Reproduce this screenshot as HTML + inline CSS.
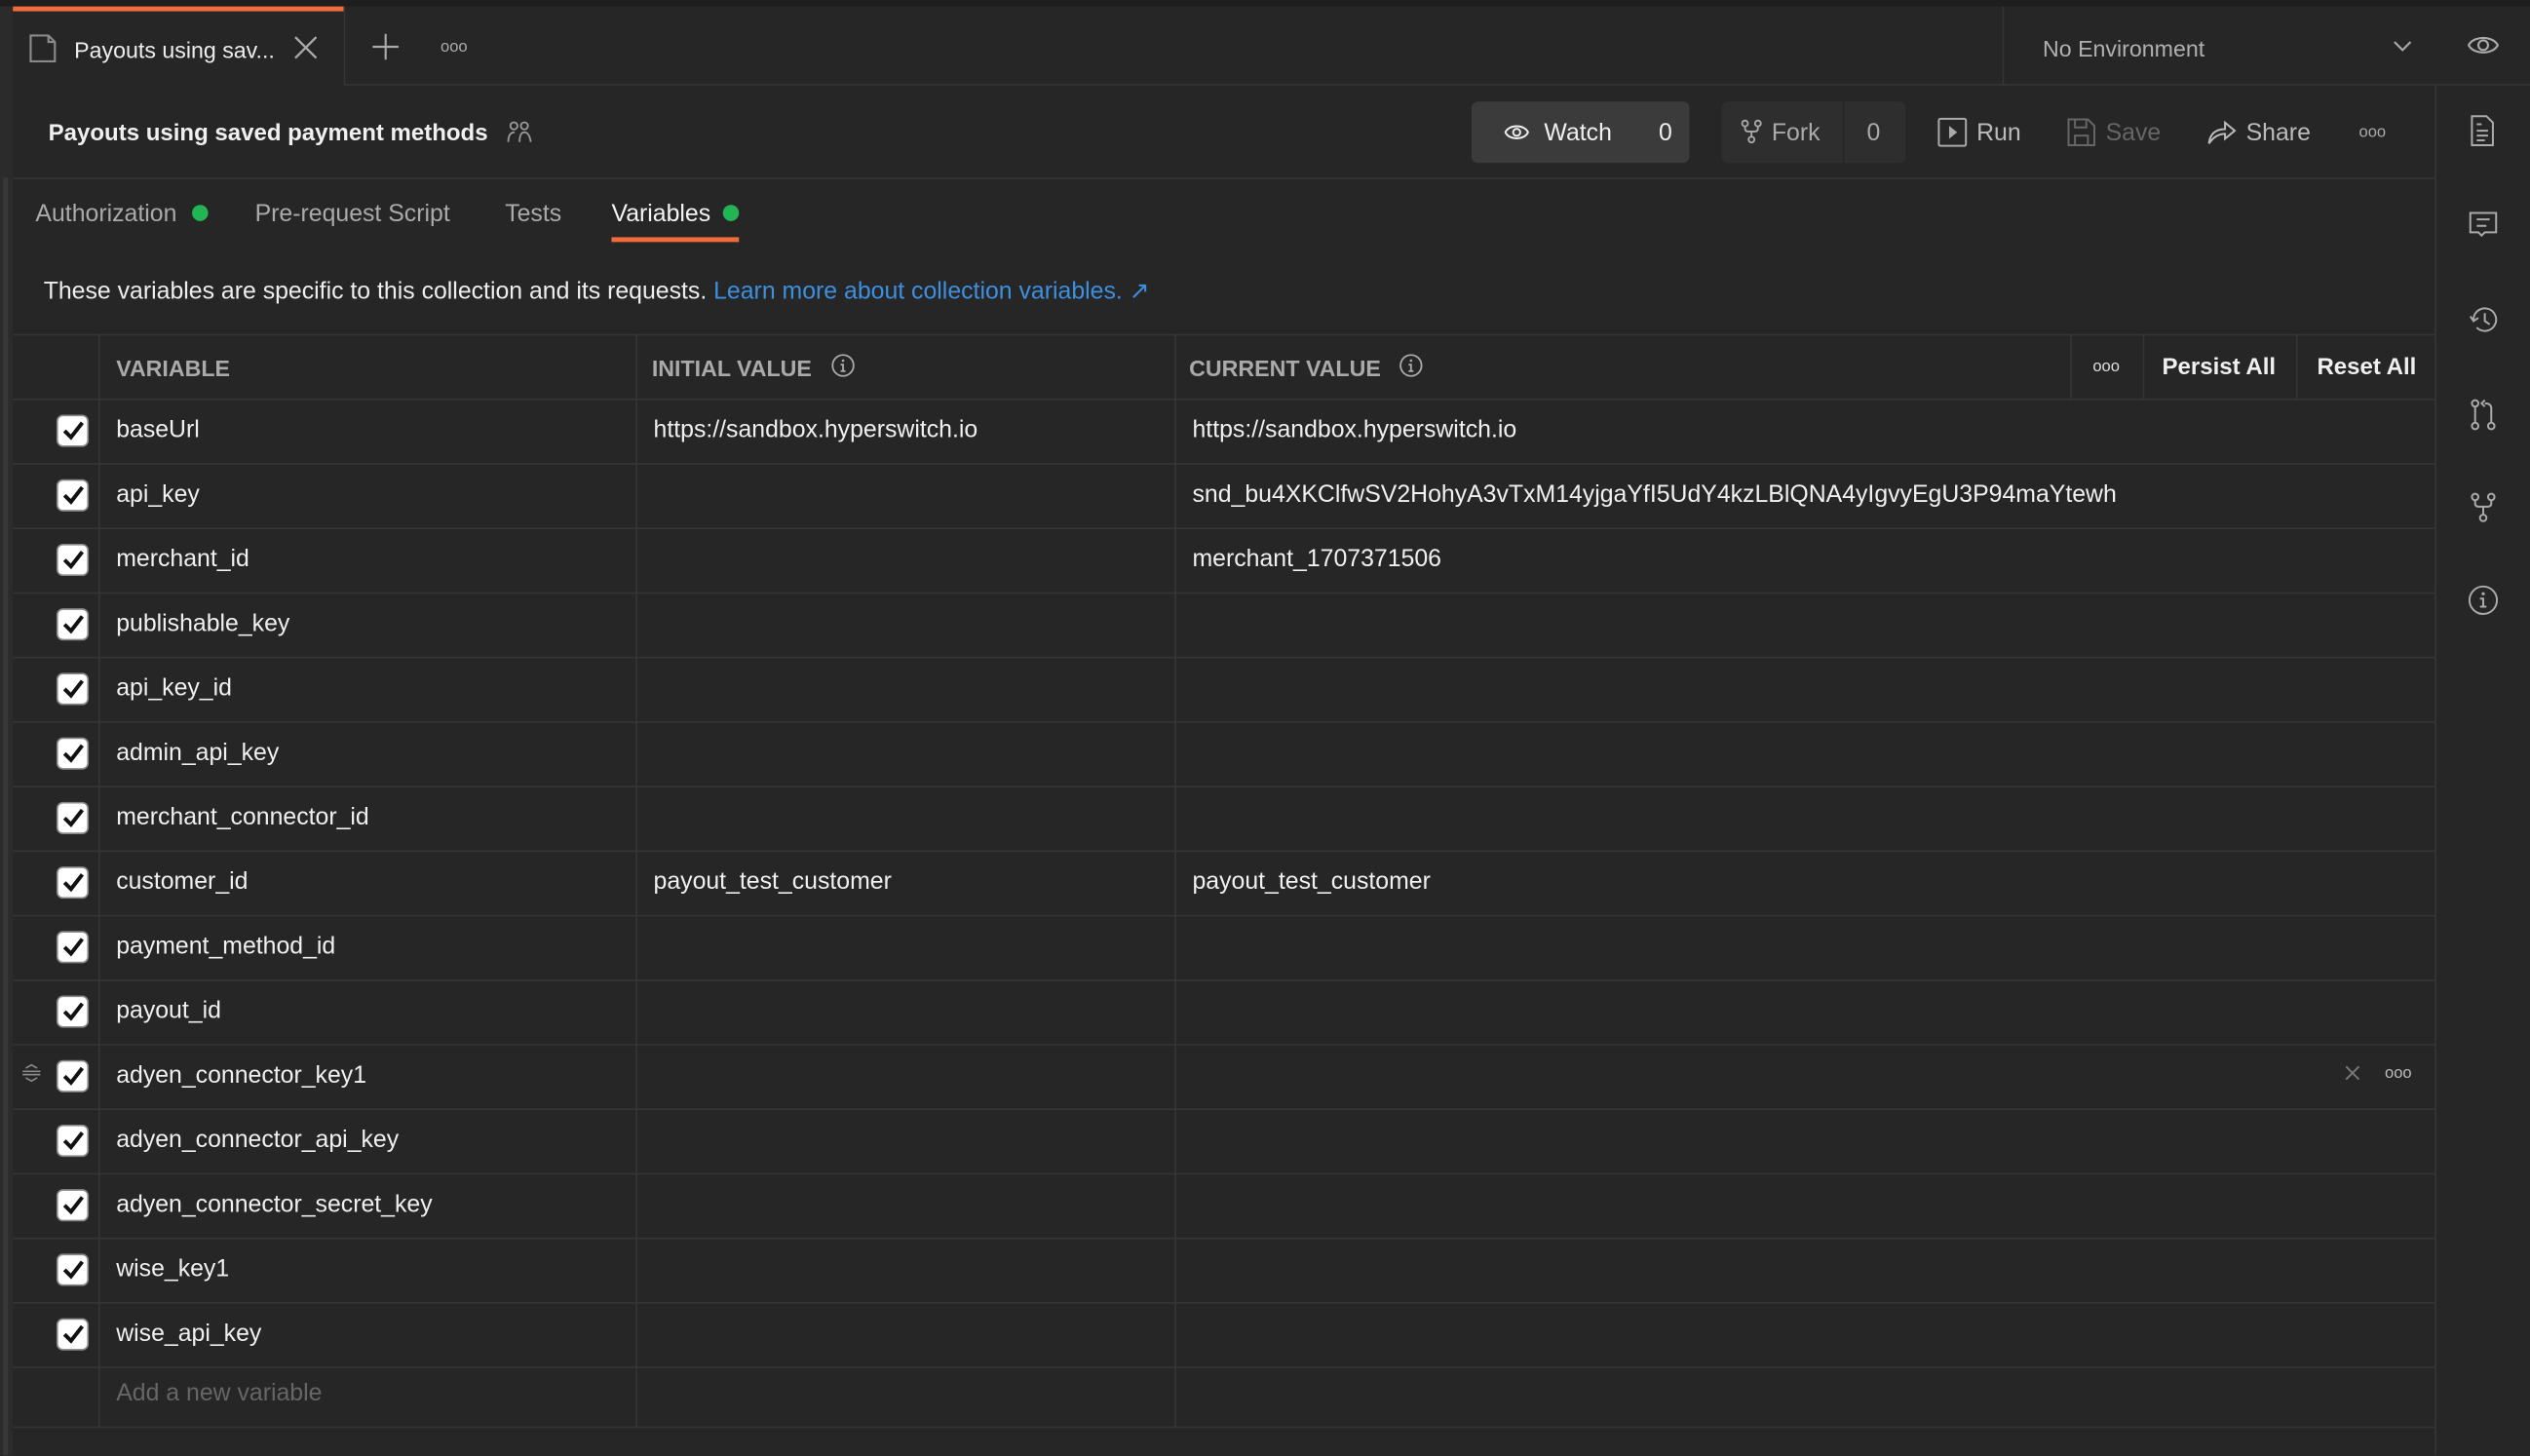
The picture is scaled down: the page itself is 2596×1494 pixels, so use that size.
<!DOCTYPE html>
<html><head><meta charset="utf-8">
<style>
*{box-sizing:border-box;margin:0;padding:0}
html,body{width:2596px;height:1494px;overflow:hidden;background:#262626}
#s{position:absolute;left:0;top:0;width:1568px;height:902px;transform:scale(1.655612);transform-origin:0 0;background:#262626;font-family:"Liberation Sans",sans-serif;color:#f0f0f0}
.a{position:absolute}
.t{position:absolute;white-space:nowrap;font-size:15px;line-height:20px;margin-top:1px}
.hl{position:absolute;height:1px;background:#353535}
.vl{position:absolute;width:1px;background:#353535}
.cb{position:absolute;left:35px;width:20px;height:20px;background:#fff;border-radius:4px;border:1px solid #888}
.cb svg{position:absolute;left:3px;top:3px}
svg{position:absolute;overflow:visible}
</style></head><body><div id="s">
<div class="a" style="left:0;top:0;width:1568px;height:4px;background:#1e1e1e"></div>
<div class="a" style="left:0;top:4px;width:8px;height:898px;background:#2b2b2b"></div>
<div class="a" style="left:2px;top:110px;width:3px;height:792px;background:#383838"></div>
<div class="a" style="left:8px;top:4px;width:205px;height:3px;background:#f26b3a"></div>
<div class="vl" style="left:213px;top:4px;height:48px"></div>
<div class="hl" style="left:213px;top:52px;width:1355px"></div>
<svg style="left:18px;top:21px" width="18" height="18"><path d="M1 1h11l4 4v12H1z M12 1v4h4" fill="none" stroke="#8a8a8a" stroke-width="1.3"/></svg>
<div class="t" style="left:46px;top:20px;font-size:14px;color:#eee">Payouts using sav...</div>
<svg style="left:182px;top:22px" width="15" height="15"><path d="M1 1l13 13M14 1L1 14" stroke="#aaa" stroke-width="1.4"/></svg>
<svg style="left:231px;top:21px" width="16" height="16"><path d="M8 0v16M0 8h16" stroke="#aaa" stroke-width="1.3"/></svg>
<div class="t" style="left:273px;top:19px;font-size:10px;color:#aaa">ooo</div>
<div class="vl" style="left:1241px;top:4px;height:48px"></div>
<div class="t" style="left:1266px;top:19px;font-size:14px;color:#b0b0b0">No Environment</div>
<svg style="left:1483px;top:25px" width="12" height="8"><path d="M1 1l5 5 5-5" fill="none" stroke="#aaa" stroke-width="1.3"/></svg>
<svg style="left:1529px;top:20px" width="20" height="16"><path d="M1 8C4 2 16 2 19 8C16 14 4 14 1 8z" fill="none" stroke="#aaa" stroke-width="1.3"/><circle cx="10" cy="8" r="3" fill="none" stroke="#aaa" stroke-width="1.3"/></svg>
<div class="vl" style="left:1509px;top:52px;height:850px"></div>
<svg style="left:1531px;top:71px" width="16" height="20"><path d="M1 1h9l4 4v14H1z M4 6h3 M4 10h7 M4 13h7 M4 16h5" fill="none" stroke="#aaa" stroke-width="1.2"/></svg>
<svg style="left:1530px;top:131px" width="18" height="18"><path d="M1 1h16v12H10l-2 2-2-2H1z M5 5h8 M5 9h6" fill="none" stroke="#aaa" stroke-width="1.2"/></svg>
<svg style="left:1530px;top:189px" width="18" height="18"><path d="M3 9a7 7 0 1 1 2 5 M1 7l2 3 3-2 M10 5v5l3 2" fill="none" stroke="#aaa" stroke-width="1.2"/></svg>
<svg style="left:1531px;top:247px" width="16" height="20"><circle cx="3" cy="3" r="2" fill="none" stroke="#aaa" stroke-width="1.2"/><circle cx="3" cy="17" r="2" fill="none" stroke="#aaa" stroke-width="1.2"/><circle cx="13" cy="17" r="2" fill="none" stroke="#aaa" stroke-width="1.2"/><path d="M3 5v10 M13 15V6q0-3-4-3 M9 1L7 3l2 2" fill="none" stroke="#aaa" stroke-width="1.2"/></svg>
<svg style="left:1531px;top:305px" width="16" height="20"><circle cx="3" cy="3" r="2" fill="none" stroke="#aaa" stroke-width="1.2"/><circle cx="13" cy="3" r="2" fill="none" stroke="#aaa" stroke-width="1.2"/><circle cx="8" cy="16" r="2" fill="none" stroke="#aaa" stroke-width="1.2"/><path d="M3 5v2q0 2 2 2h6q2 0 2-2V5 M8 9v5" fill="none" stroke="#aaa" stroke-width="1.2"/></svg>
<svg style="left:1529px;top:362px" width="20" height="20"><circle cx="10" cy="10" r="8.5" fill="none" stroke="#aaa" stroke-width="1.2"/><circle cx="10" cy="6" r="1" fill="#aaa"/><path d="M8 9h2v5 M8 14h4" fill="none" stroke="#aaa" stroke-width="1.2"/></svg>
<div class="t" style="left:30px;top:72px;font-weight:bold;font-size:14.5px">Payouts using saved payment methods</div>
<svg style="left:314px;top:75px" width="16" height="14"><circle cx="4.5" cy="3" r="2.2" fill="none" stroke="#999" stroke-width="1.1"/><circle cx="11" cy="3" r="2.2" fill="none" stroke="#999" stroke-width="1.1"/><path d="M1 13q0-6 4-6M8 13q0-6 3-6 3 0 4 6" fill="none" stroke="#999" stroke-width="1.1"/></svg>
<div class="a" style="left:912px;top:63px;width:135px;height:38px;background:#3b3b3b;border-radius:4px"></div>
<svg style="left:932px;top:76px" width="16" height="12"><path d="M1 6C3 1 13 1 15 6C13 11 3 11 1 6z" fill="none" stroke="#eee" stroke-width="1.2"/><circle cx="8" cy="6" r="2.2" fill="none" stroke="#eee" stroke-width="1.2"/></svg>
<div class="t" style="left:957px;top:72px">Watch</div>
<div class="t" style="left:1028px;top:72px">0</div>
<div class="a" style="left:1067px;top:63px;width:114px;height:38px;background:#2e2e2e;border-radius:4px"></div>
<div class="vl" style="left:1142px;top:63px;height:38px;background:#262626"></div>
<svg style="left:1079px;top:74px" width="13" height="15"><circle cx="2.5" cy="2.5" r="1.8" fill="none" stroke="#aaa" stroke-width="1.1"/><circle cx="10.5" cy="2.5" r="1.8" fill="none" stroke="#aaa" stroke-width="1.1"/><circle cx="6.5" cy="12.5" r="1.8" fill="none" stroke="#aaa" stroke-width="1.1"/><path d="M2.5 4.5v1q0 2 2 2h4q2 0 2-2v-1M6.5 7.5v3" fill="none" stroke="#aaa" stroke-width="1.1"/></svg>
<div class="t" style="left:1098px;top:72px;color:#aaa">Fork</div>
<div class="t" style="left:1157px;top:72px;color:#aaa">0</div>
<svg style="left:1201px;top:73px" width="18" height="18"><rect x="0.6" y="0.6" width="16.8" height="16.8" rx="1" fill="none" stroke="#aaa" stroke-width="1.2"/><path d="M7 5l5 4-5 4z" fill="#aaa"/></svg>
<div class="t" style="left:1225px;top:72px;color:#bbb">Run</div>
<svg style="left:1281px;top:73px" width="18" height="18"><path d="M1 1h12l4 4v12H1z M5 1v5h7V1 M5 17v-6h8v6" fill="none" stroke="#666" stroke-width="1.2"/></svg>
<div class="t" style="left:1305px;top:72px;color:#666">Save</div>
<svg style="left:1368px;top:73px" width="18" height="17"><path d="M1 16q1-9 10-9V3l6 5-6 5V10q-6 0-10 6" fill="none" stroke="#bbb" stroke-width="1.2"/></svg>
<div class="t" style="left:1392px;top:72px;color:#bbb">Share</div>
<div class="t" style="left:1462px;top:72px;font-size:10px;color:#aaa">ooo</div>
<div class="hl" style="left:8px;top:110px;width:1501px"></div>
<div class="t" style="left:22px;top:122px;color:#aaa">Authorization</div>
<div class="a" style="left:119px;top:127px;width:10px;height:10px;border-radius:50%;background:#22b455"></div>
<div class="t" style="left:158px;top:122px;color:#aaa">Pre-request Script</div>
<div class="t" style="left:313px;top:122px;color:#aaa">Tests</div>
<div class="t" style="left:379px;top:122px;color:#f4f4f4">Variables</div>
<div class="a" style="left:448px;top:127px;width:10px;height:10px;border-radius:50%;background:#22b455"></div>
<div class="a" style="left:379px;top:147px;width:79px;height:3px;background:#f26b3a"></div>
<div class="t" style="left:27px;top:170px;color:#eee">These variables are specific to this collection and its requests. <span style="color:#3d8fe0">Learn more about collection variables. ↗</span></div>
<div class="hl" style="left:8px;top:207px;width:1501px"></div>
<div class="t" style="left:72px;top:217px;color:#aaa;font-weight:bold;font-size:14px">VARIABLE</div>
<div class="t" style="left:404px;top:217px;color:#aaa;font-weight:bold;font-size:14px">INITIAL VALUE</div>
<svg style="left:515px;top:219px" width="15" height="15"><circle cx="7.5" cy="7.5" r="6.5" fill="none" stroke="#aaa" stroke-width="1.1"/><circle cx="7.5" cy="4.5" r=".8" fill="#aaa"/><path d="M6 7h1.5v4M6 11h3" fill="none" stroke="#aaa" stroke-width="1.1"/></svg>
<div class="t" style="left:737px;top:217px;color:#aaa;font-weight:bold;font-size:14px">CURRENT VALUE</div>
<svg style="left:867px;top:219px" width="15" height="15"><circle cx="7.5" cy="7.5" r="6.5" fill="none" stroke="#aaa" stroke-width="1.1"/><circle cx="7.5" cy="4.5" r=".8" fill="#aaa"/><path d="M6 7h1.5v4M6 11h3" fill="none" stroke="#aaa" stroke-width="1.1"/></svg>
<div class="vl" style="left:1283px;top:207px;height:40px"></div>
<div class="t" style="left:1297px;top:217px;font-size:10px;color:#ddd">ooo</div>
<div class="vl" style="left:1328px;top:207px;height:40px"></div>
<div class="t" style="left:1340px;top:217px;font-weight:bold;font-size:14.5px">Persist All</div>
<div class="vl" style="left:1423px;top:207px;height:40px"></div>
<div class="t" style="left:1436px;top:217px;font-weight:bold;font-size:14.5px">Reset All</div>
<div class="vl" style="left:61px;top:207px;height:677px"></div>
<div class="vl" style="left:394px;top:207px;height:677px"></div>
<div class="vl" style="left:728px;top:207px;height:677px"></div>
<div id="rows"></div>
<div class="hl" style="left:8px;top:884px;width:1501px"></div>
<div class="t" style="left:72px;top:853px;color:#666">Add a new variable</div>
<svg style="left:13px;top:659px" width="13" height="12"><path d="M1 5h11M1 7h11M3 3l3.5-2 3.5 2M3 9l3.5 2 3.5-2" fill="none" stroke="#888" stroke-width="1"/></svg>
<svg style="left:1453px;top:660px" width="10" height="10"><path d="M1 1l8 8M9 1L1 9" stroke="#777" stroke-width="1.2"/></svg>
<div class="t" style="left:1478px;top:655px;font-size:10px;color:#bbb">ooo</div>
</div>
<script>
var d=[["baseUrl","https://sandbox.hyperswitch.io","https://sandbox.hyperswitch.io"],["api_key","","snd_bu4XKClfwSV2HohyA3vTxM14yjgaYfI5UdY4kzLBlQNA4yIgvyEgU3P94maYtewh"],["merchant_id","","merchant_1707371506"],["publishable_key","",""],["api_key_id","",""],["admin_api_key","",""],["merchant_connector_id","",""],["customer_id","payout_test_customer","payout_test_customer"],["payment_method_id","",""],["payout_id","",""],["adyen_connector_key1","",""],["adyen_connector_api_key","",""],["adyen_connector_secret_key","",""],["wise_key1","",""],["wise_api_key","",""]];
var h="";
d.forEach(function(r,i){var y=247+40*i;
h+='<div class="hl" style="left:8px;top:'+y+'px;width:1501px"></div>';
h+='<div class="cb" style="top:'+(y+10)+'px"><svg width="13" height="12"><path d="M1 6l4 4 7-9" fill="none" stroke="#111" stroke-width="2.4"/></svg></div>';
h+='<div class="t" style="left:72px;top:'+(y+9)+'px">'+r[0]+'</div>';
if(r[1])h+='<div class="t" style="left:405px;top:'+(y+9)+'px">'+r[1]+'</div>';
if(r[2])h+='<div class="t" style="left:739px;top:'+(y+9)+'px">'+r[2]+'</div>';
});
h+='<div class="hl" style="left:8px;top:847px;width:1501px"></div>';
document.getElementById("rows").outerHTML=h;
</script>
</body></html>
